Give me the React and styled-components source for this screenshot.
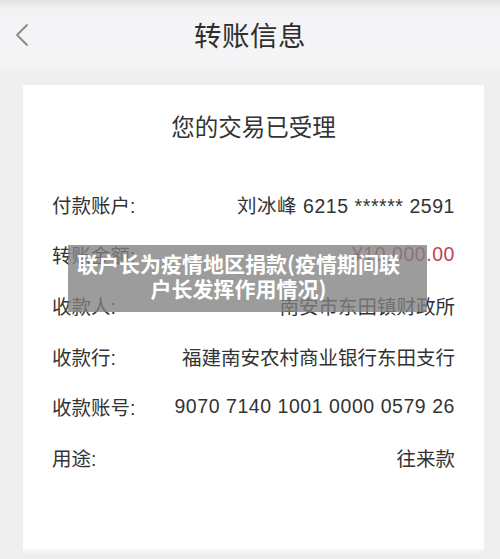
import React from "react";
import styled, { createGlobalStyle } from "styled-components";

const Global = createGlobalStyle`
  html, body { margin: 0; padding: 0; }
  body {
    background: #f0f0f0;
    font-family: "Liberation Sans", "Noto Sans CJK SC", sans-serif;
    color: #333;
  }
`;

const Page = styled.div`
  width: 500px;
  height: 559px;
  overflow: hidden;
  position: relative;
  background: #efefef;
`;

const Header = styled.header`
  height: 74px;
  display: flex;
  align-items: center;
  justify-content: center;
  position: relative;
  background: linear-gradient(#e2e2e2 0px, #f3f3f5 9px, #f5f5f7 60px, #f0f0f0 74px);
`;

const Back = styled.button`
  position: absolute;
  left: 10px;
  top: 20px;
  width: 24px;
  height: 30px;
  border: 0;
  background: none;
  padding: 0;
  display: flex;
  align-items: center;
  justify-content: center;
`;

const Title = styled.h1`
  margin: 0;
  font-size: 27.5px;
  font-weight: 400;
  line-height: 34px;
  color: #2e2e2e;
  letter-spacing: 0.5px;
`;

const Card = styled.section`
  margin: 11px 0 0 23px;
  width: 461px;
  background: #fff;
  padding: 27px 29px 66px;
  box-sizing: border-box;
  position: relative;
`;

const CardTitle = styled.h2`
  margin: 0 0 35px;
  text-align: center;
  font-size: 23.5px;
  font-weight: 400;
  line-height: 32px;
  color: #333;
`;

const Rows = styled.div`
  display: flex;
  flex-direction: column;
`;

const Row = styled.div`
  height: 50.6px;
  display: flex;
  align-items: center;
  justify-content: space-between;
  font-size: 19.5px;
  color: #333;
`;

const Label = styled.span`
  white-space: nowrap;
`;

const Value = styled.span`
  white-space: nowrap;
  text-align: right;
  letter-spacing: ${(p) => (p.$num ? "0.55px" : "0")};
  color: ${(p) => (p.$red ? "#c4434b" : "#333")};
`;

const Overlay = styled.div`
  position: absolute;
  left: 68px;
  top: 245px;
  width: 359px;
  height: 67px;
  box-sizing: border-box;
  padding: 6px 18px 0 0;
  background: rgba(128, 128, 128, 0.78);
  color: #fff;
  font-family: "Noto Sans CJK SC", sans-serif;
  font-weight: 700;
  font-size: 21px;
  line-height: 25px;
  text-align: center;
`;

const Footer = styled.div`
  margin: 0 16px 0 23px;
  height: 8px;
  background: linear-gradient(#f7f7f7, #ececec);
`;

const rows = [
  ["付款账户:", "刘冰峰 6215 ****** 2591", false, true],
  ["转账金额:", "¥10,000.00", true, true],
  ["收款人:", "南安市东田镇财政所"],
  ["收款行:", "福建南安农村商业银行东田支行"],
  ["收款账号:", "9070 7140 1001 0000 0579 26", false, true],
  ["用途:", "往来款"],
];

export default function App() {
  return (
    <Page>
      <Global />
      <Header>
        <Back aria-label="返回">
          <svg width="16" height="24" viewBox="0 0 16 24">
            <polyline points="13,2 3,12 13,22" fill="none" stroke="#8a8a8a" strokeWidth="1.8" strokeLinecap="round" strokeLinejoin="round" />
          </svg>
        </Back>
        <Title>转账信息</Title>
      </Header>
      <Card>
        <CardTitle>您的交易已受理</CardTitle>
        <Rows>
          {rows.map(([l, v, red, num]) => (
            <Row key={l}>
              <Label>{l}</Label>
              <Value $red={red} $num={num}>{v}</Value>
            </Row>
          ))}
        </Rows>
      </Card>
      <Footer />
      <Overlay>
        联户长为疫情地区捐款(疫情期间联
        <br />
        户长发挥作用情况)
      </Overlay>
    </Page>
  );
}
